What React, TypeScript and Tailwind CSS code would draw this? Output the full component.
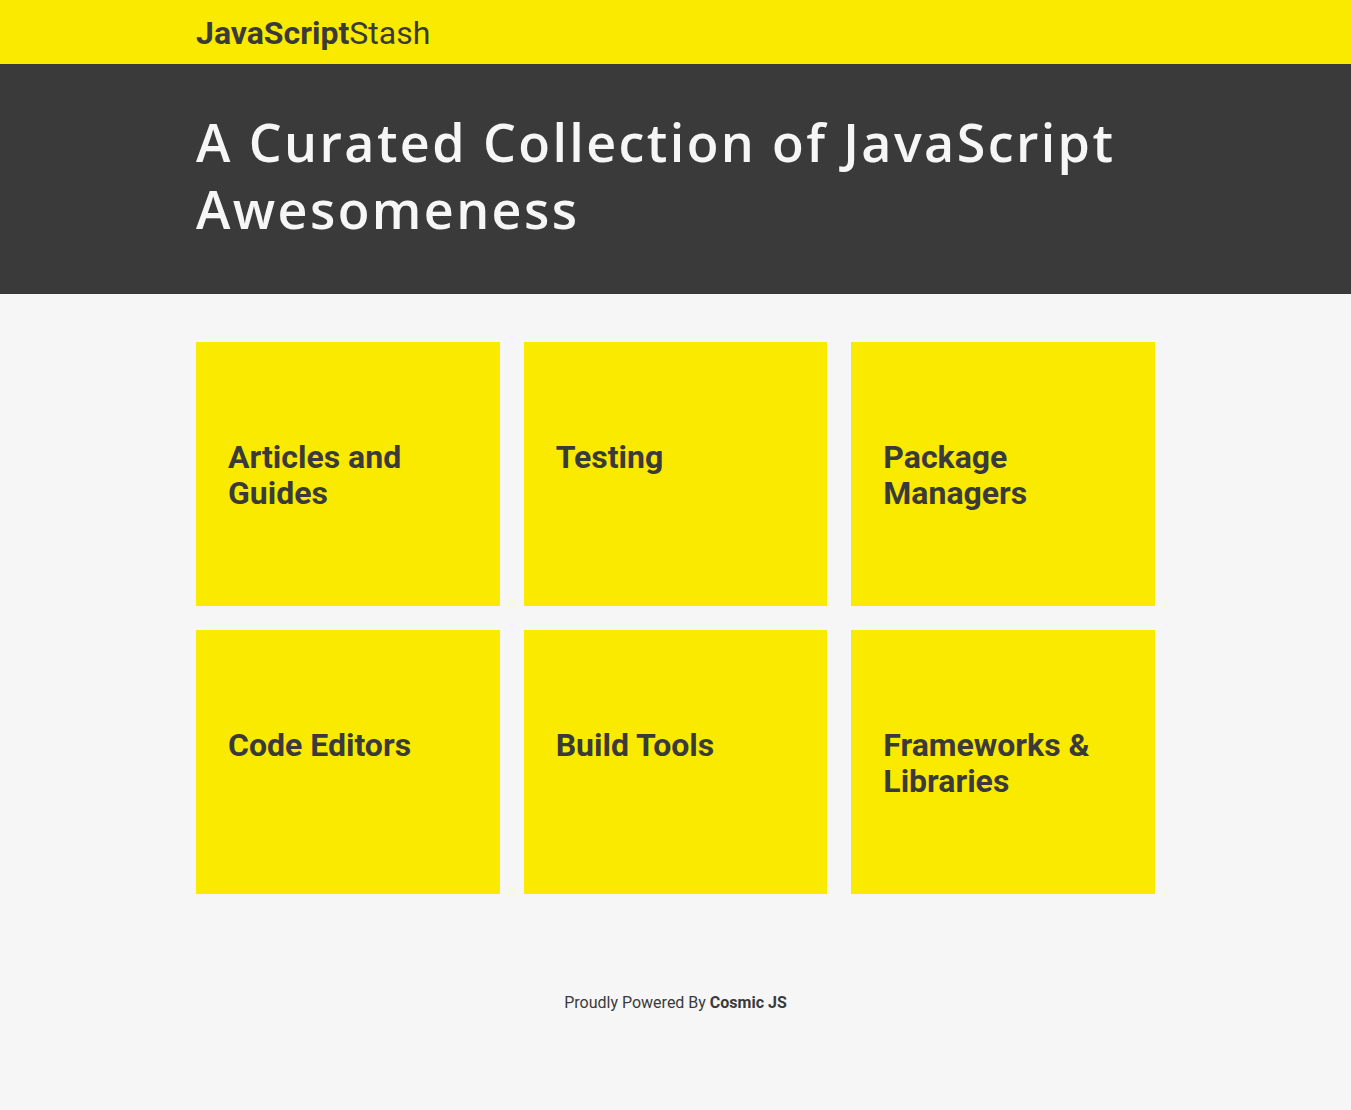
const categories = [
  'Articles and Guides',
  'Testing',
  'Package Managers',
  'Code Editors',
  'Build Tools',
  'Frameworks & Libraries',
];

export default function App() {
  return (
    <div className="min-h-[1110px] bg-[#f6f6f6] font-['Roboto',sans-serif] text-[#3a3a3a]">
      {/* nav */}
      <header className="h-16 bg-[#faea00]">
        <div className="mx-auto flex h-full max-w-[959px] items-center pt-[2px]">
          <a className="text-[32px] leading-none">
            <span className="font-bold">JavaScript</span>
            <span>Stash</span>
          </a>
        </div>
      </header>

      {/* hero */}
      <section className="h-[230px] bg-[#3a3a3a]">
        <div className="mx-auto max-w-[959px] pt-[44px]">
          <h1 className="font-['Open_Sans',sans-serif] text-[52px] font-semibold leading-[67px] tracking-[2.4px] text-[#f6f6f6]">
            A Curated Collection of JavaScript Awesomeness
          </h1>
        </div>
      </section>

      {/* categories */}
      <main className="mx-auto grid max-w-[959px] grid-cols-3 gap-6 pt-12">
        {categories.map((name) => (
          <a key={name} className="h-[264px] bg-[#faea00] px-8 pt-[97px]">
            <h2 className="text-[32px] font-bold leading-9">{name}</h2>
          </a>
        ))}
      </main>

      {/* footer */}
      <footer className="pt-[97px] text-center text-base">
        Proudly Powered By <span className="font-bold">Cosmic JS</span>
      </footer>
    </div>
  );
}
